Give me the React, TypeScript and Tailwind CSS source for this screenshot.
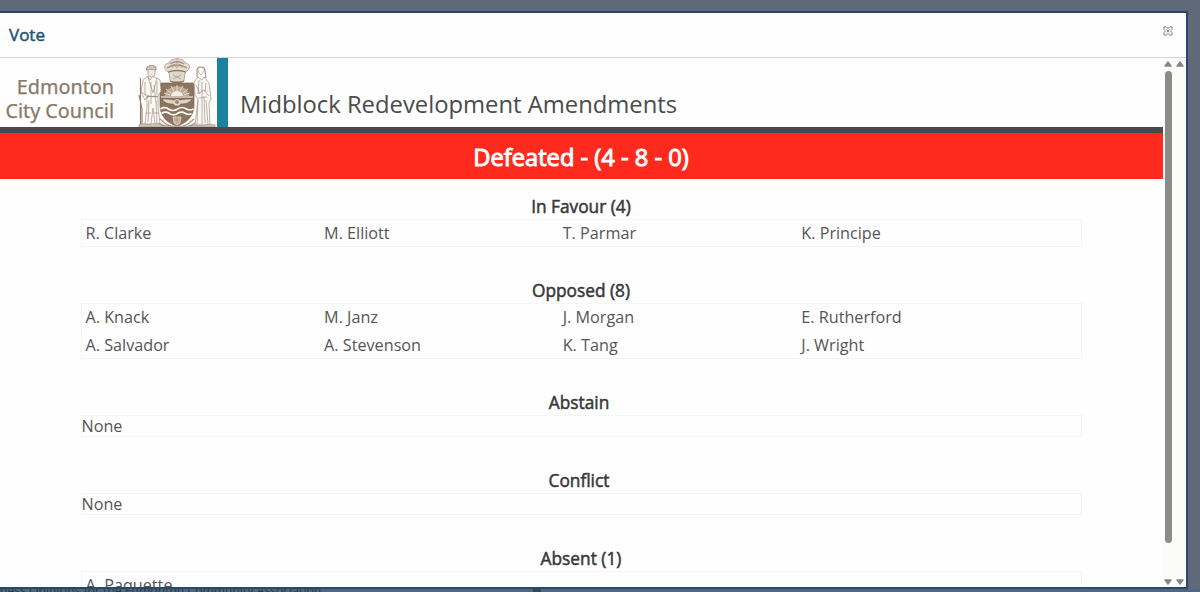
type Section = { title: string; names: string[] }

const sections: Section[] = [
  { title: "In Favour (4)", names: ["R. Clarke", "M. Elliott", "T. Parmar", "K. Principe"] },
  {
    title: "Opposed (8)",
    names: [
      "A. Knack",
      "M. Janz",
      "J. Morgan",
      "E. Rutherford",
      "A. Salvador",
      "A. Stevenson",
      "K. Tang",
      "J. Wright",
    ],
  },
  { title: "Abstain", names: [] },
  { title: "Conflict", names: [] },
  { title: "Absent (1)", names: ["A. Paquette"] },
]

function Crest() {
  return (
    <svg viewBox="0 0 80 69" className="h-[69px] w-20 shrink-0" fill="none" stroke="#a39281" strokeWidth="0.7">
      {/* crown */}
      <path d="M29 12c-3-3-1-7 3-7 1-3 4-4 6-4l2-1 2 1c3 0 5 1 6 4 4 0 6 4 3 7l-3 3H32z" fill="#e4dcd3" />
      <path d="M30 10c6-4 14-4 20 0M33 6c4-3 10-3 14 0" strokeWidth="1.3" />
      <path d="M35 10l2-4 3 4 3-4 2 4M40 1v5" />
      <path d="M32 14c5-2 11-2 16 0l-1 9c-5 2-9 2-14 0z" fill="#e0d7ce" />
      <path d="M31 14c5-2 13-2 18 0M33 23c5 2 9 2 14 0" stroke="#8f7a65" strokeWidth="1.3" />
      <path d="M36 17l8 4M44 17l-8 4" />
      {/* shield */}
      <path d="M22 27l2-2h10l6-1 6 1h10l2 2-1 5v15c0 11-7 18-17 21-10-3-17-10-17-21V32z" fill="#8d755d" stroke="#7c654f" />
      <path d="M28 38a12 10 0 0 1 24 0z" fill="#bcaa98" stroke="none" />
      <path d="M34 38a6 5 0 0 1 12 0z" fill="#f3ede6" stroke="none" />
      <path d="M40 33v-6M37 33l-3-5M43 33l3-5M34 35l-5-4M46 35l5-4M33 37l-6-2M47 37l6-2" stroke="#f0e9e1" strokeWidth="0.8" />
      <path d="M24 39h32" stroke="#f7f2ec" strokeWidth="1.1" />
      <path d="M25 41c5 0 9 0 12 1 2-1 4-1 6 0 3-1 7-1 12-1-2 4-6 5-11 5l-2 2h-4l-2-2c-5 0-9-1-11-5z" fill="#ddd2c6" stroke="#695640" strokeWidth="0.6" />
      <circle cx="40" cy="44" r="2.5" fill="#a08a74" stroke="#f5efe8" />
      <path d="M23.500 51c3-2 5-2 8 0s6 2 9 0 6-2 9 0 5 1 7 0M24.500 55.500c3-2 5-2 8 0s5 2 8 0 5-2 8 0 4 1 6 0" stroke="#fffaf5" strokeWidth="1.7" />
      <path d="M36 59h8l-1 6-3 2-3-2z" fill="#c8b8a7" stroke="#e8dfd5" />
      <path d="M37 62h6M40 59v6" />
      {/* trader with musket */}
      <path d="M10 9c1-2 8-2 9 0v3H9z" fill="#cfc3b6" stroke="#8f7a65" />
      <path d="M11 12v4c1 4 6 4 7 0v-4" fill="#ede8e2" />
      <path d="M11 18l-5 4-2 12 4 8 2-3v10l-2 17h6l2-16 2 16h5l-2-18V38l3-5-1-11-7-4-3 4z" fill="#faf8f5" />
      <path d="M3.500 20v48M2 37l3 14v17" stroke="#8f7a65" strokeWidth="1.1" />
      <path d="M8 24v12l4 2M20 23v14M11 19l5 16 4-15M14 24v22M17 27l2 17M5 34l6 6M9 55h5M17 55h5M12 42l-1 22M19 43l1 22" />
      <path d="M10 38.500h11" strokeWidth="1.3" />
      {/* robed figure */}
      <path d="M60 19v-7c1-4 7-4 8 0l1 8" strokeWidth="1.1" />
      <path d="M61 12c1 6 5 6 6 0" />
      <path d="M61 19l-4 5 1 13 3 4-3 26h15l-1-22 2-4-2-16-5-6-2 3z" fill="#faf8f5" />
      <path d="M62 22l-1 14 6-4 5 6M65 24v42M69 25l-1 9M61 42l-1 24M69 42l2 24M67 38l1 27M62 40l8-1M59 27l4 9" />
      {/* compartment */}
      <path d="M2 67c5-3 8 1 13-1 6-2 9 2 15 1l5 1h10c6 1 10-2 15-1 7 1 12-2 18 0v2H2z" fill="#cfc3b7" />
      <path d="M23 61l6 5 5 2M57 61l-6 5-5 2M22 65l5 3M58 65l-5 3" strokeWidth="1.1" />
    </svg>
  )
}

function CloseIcon() {
  return (
    <svg viewBox="0 0 10 10" className="h-2.5 w-2.5" fill="#fff" stroke="#777" strokeWidth="0.9">
      <path d="M1 1h2.500L5 2.500 6.500 1H9v2.500L7.500 5 9 6.500V9H6.500L5 7.500 3.500 9H1V6.500L2.500 5 1 3.500z" />
      <path d="M3.500 3.500l3 3M6.500 3.500l-3 3" />
    </svg>
  )
}

function Arrow({ down = false }: { down?: boolean }) {
  return (
    <svg viewBox="0 0 8 6" className={down ? "h-1.5 w-2 rotate-180" : "h-1.5 w-2"} fill="#858585">
      <path d="M3.300.7a1 1 0 0 1 1.400 0L7.500 4.500a.8.8 0 0 1-.7 1.300H1.200a.8.8 0 0 1-.7-1.300z" />
    </svg>
  )
}

function VoteSection({ title, names }: Section) {
  const empty = names.length === 0

  return (
    <section className="mb-8 w-[1001px]">
      <h2
        className={`h-6 text-center text-[17.3px] leading-6 text-[#383838] [-webkit-text-stroke:0.5px_#383838] ${empty ? "pr-[4px]" : ""}`}
      >
        {title}
      </h2>
      {empty ? (
        <div className="h-[22px] pl-px leading-[22px] outline -outline-offset-1 outline-[#f5f5f5]">None</div>
      ) : (
        <div className="grid grid-cols-[repeat(4,238.6px)] pl-[5px] leading-7 outline -outline-offset-1 outline-[#f5f5f5]">
          {names.map((name) => (
            <span key={name}>{name}</span>
          ))}
        </div>
      )}
    </section>
  )
}

export default function App() {
  return (
    <div className="flex h-[592px] w-[1200px] flex-col overflow-hidden bg-[#5f6977] pt-[11px] font-['Open_Sans',sans-serif] text-[#555]">
      <div className="flex h-[578px] w-[1188px] shrink-0 flex-col border-y-2 border-r-2 border-[#28496b] bg-[#fefefe]">
        <header className="flex h-[45px] shrink-0 items-center justify-between border-b border-[#d2d4d5] pr-[13px] pl-[9px]">
          <h1 className="text-[17px] leading-6 text-[#245574] [-webkit-text-stroke:0.5px_#245574]">Vote</h1>
          <button type="button" aria-label="Close" className="mb-2">
            <CloseIcon />
          </button>
        </header>

        <div className="flex min-h-0 flex-1">
          <main className="flex w-[1163px] flex-col overflow-hidden">
            <div className="flex h-[75px] shrink-0 border-b-6 border-[#4b4947]">
              <div className="flex w-[114px] flex-col justify-center pt-[13px] text-right font-['Noto_Sans',sans-serif] text-[19.8px] leading-6 text-[#8a7967] [-webkit-text-stroke:0.25px_#8a7967]">
                <span>Edmonton</span>
                <span className="whitespace-nowrap">City Council</span>
              </div>
              <div className="ml-[23px]">
                <Crest />
              </div>
              <div className="h-[69px] w-[11px] bg-[#1a819f]" />
              <p className="pt-[30px] pl-3 text-[23.8px] leading-8 text-[#4b4b4b]">
                Midblock Redevelopment Amendments
              </p>
            </div>

            <div className="h-[46px] shrink-0 bg-[#fe2a1e] pr-px text-center text-[23.7px] leading-[48px] text-white [-webkit-text-stroke:1px_white]">
              Defeated - (4 - 8 - 0)
            </div>

            <div className="flex flex-col items-center pt-4 pr-px text-[16.2px]">
              {sections.map((section) => (
                <VoteSection key={section.title} {...section} />
              ))}
            </div>
          </main>

          <div className="flex w-[23px] flex-col justify-between bg-[#fbfbfa] pt-[3px] pb-[2px] pl-[1px]">
            <div className="flex gap-1">
              <Arrow />
              <Arrow />
            </div>
            <div className="mt-1 mb-auto ml-px h-[472px] w-[7px] rounded-full bg-[#8b8b8b]" />
            <div className="flex gap-1">
              <Arrow down />
              <Arrow down />
            </div>
          </div>
        </div>
      </div>

      {/* page behind the dialog */}
      <div className="flex h-[3px] w-full shrink-0 overflow-hidden bg-[#4f6880] text-[12.2px] leading-[3px] text-[#26384b]">
        <span className="w-[533px] whitespace-nowrap">ness Opinions for the Edmonton Community Association</span>
        <span className="h-[3px] w-2 bg-[#34485c]" />
      </div>
    </div>
  )
}
